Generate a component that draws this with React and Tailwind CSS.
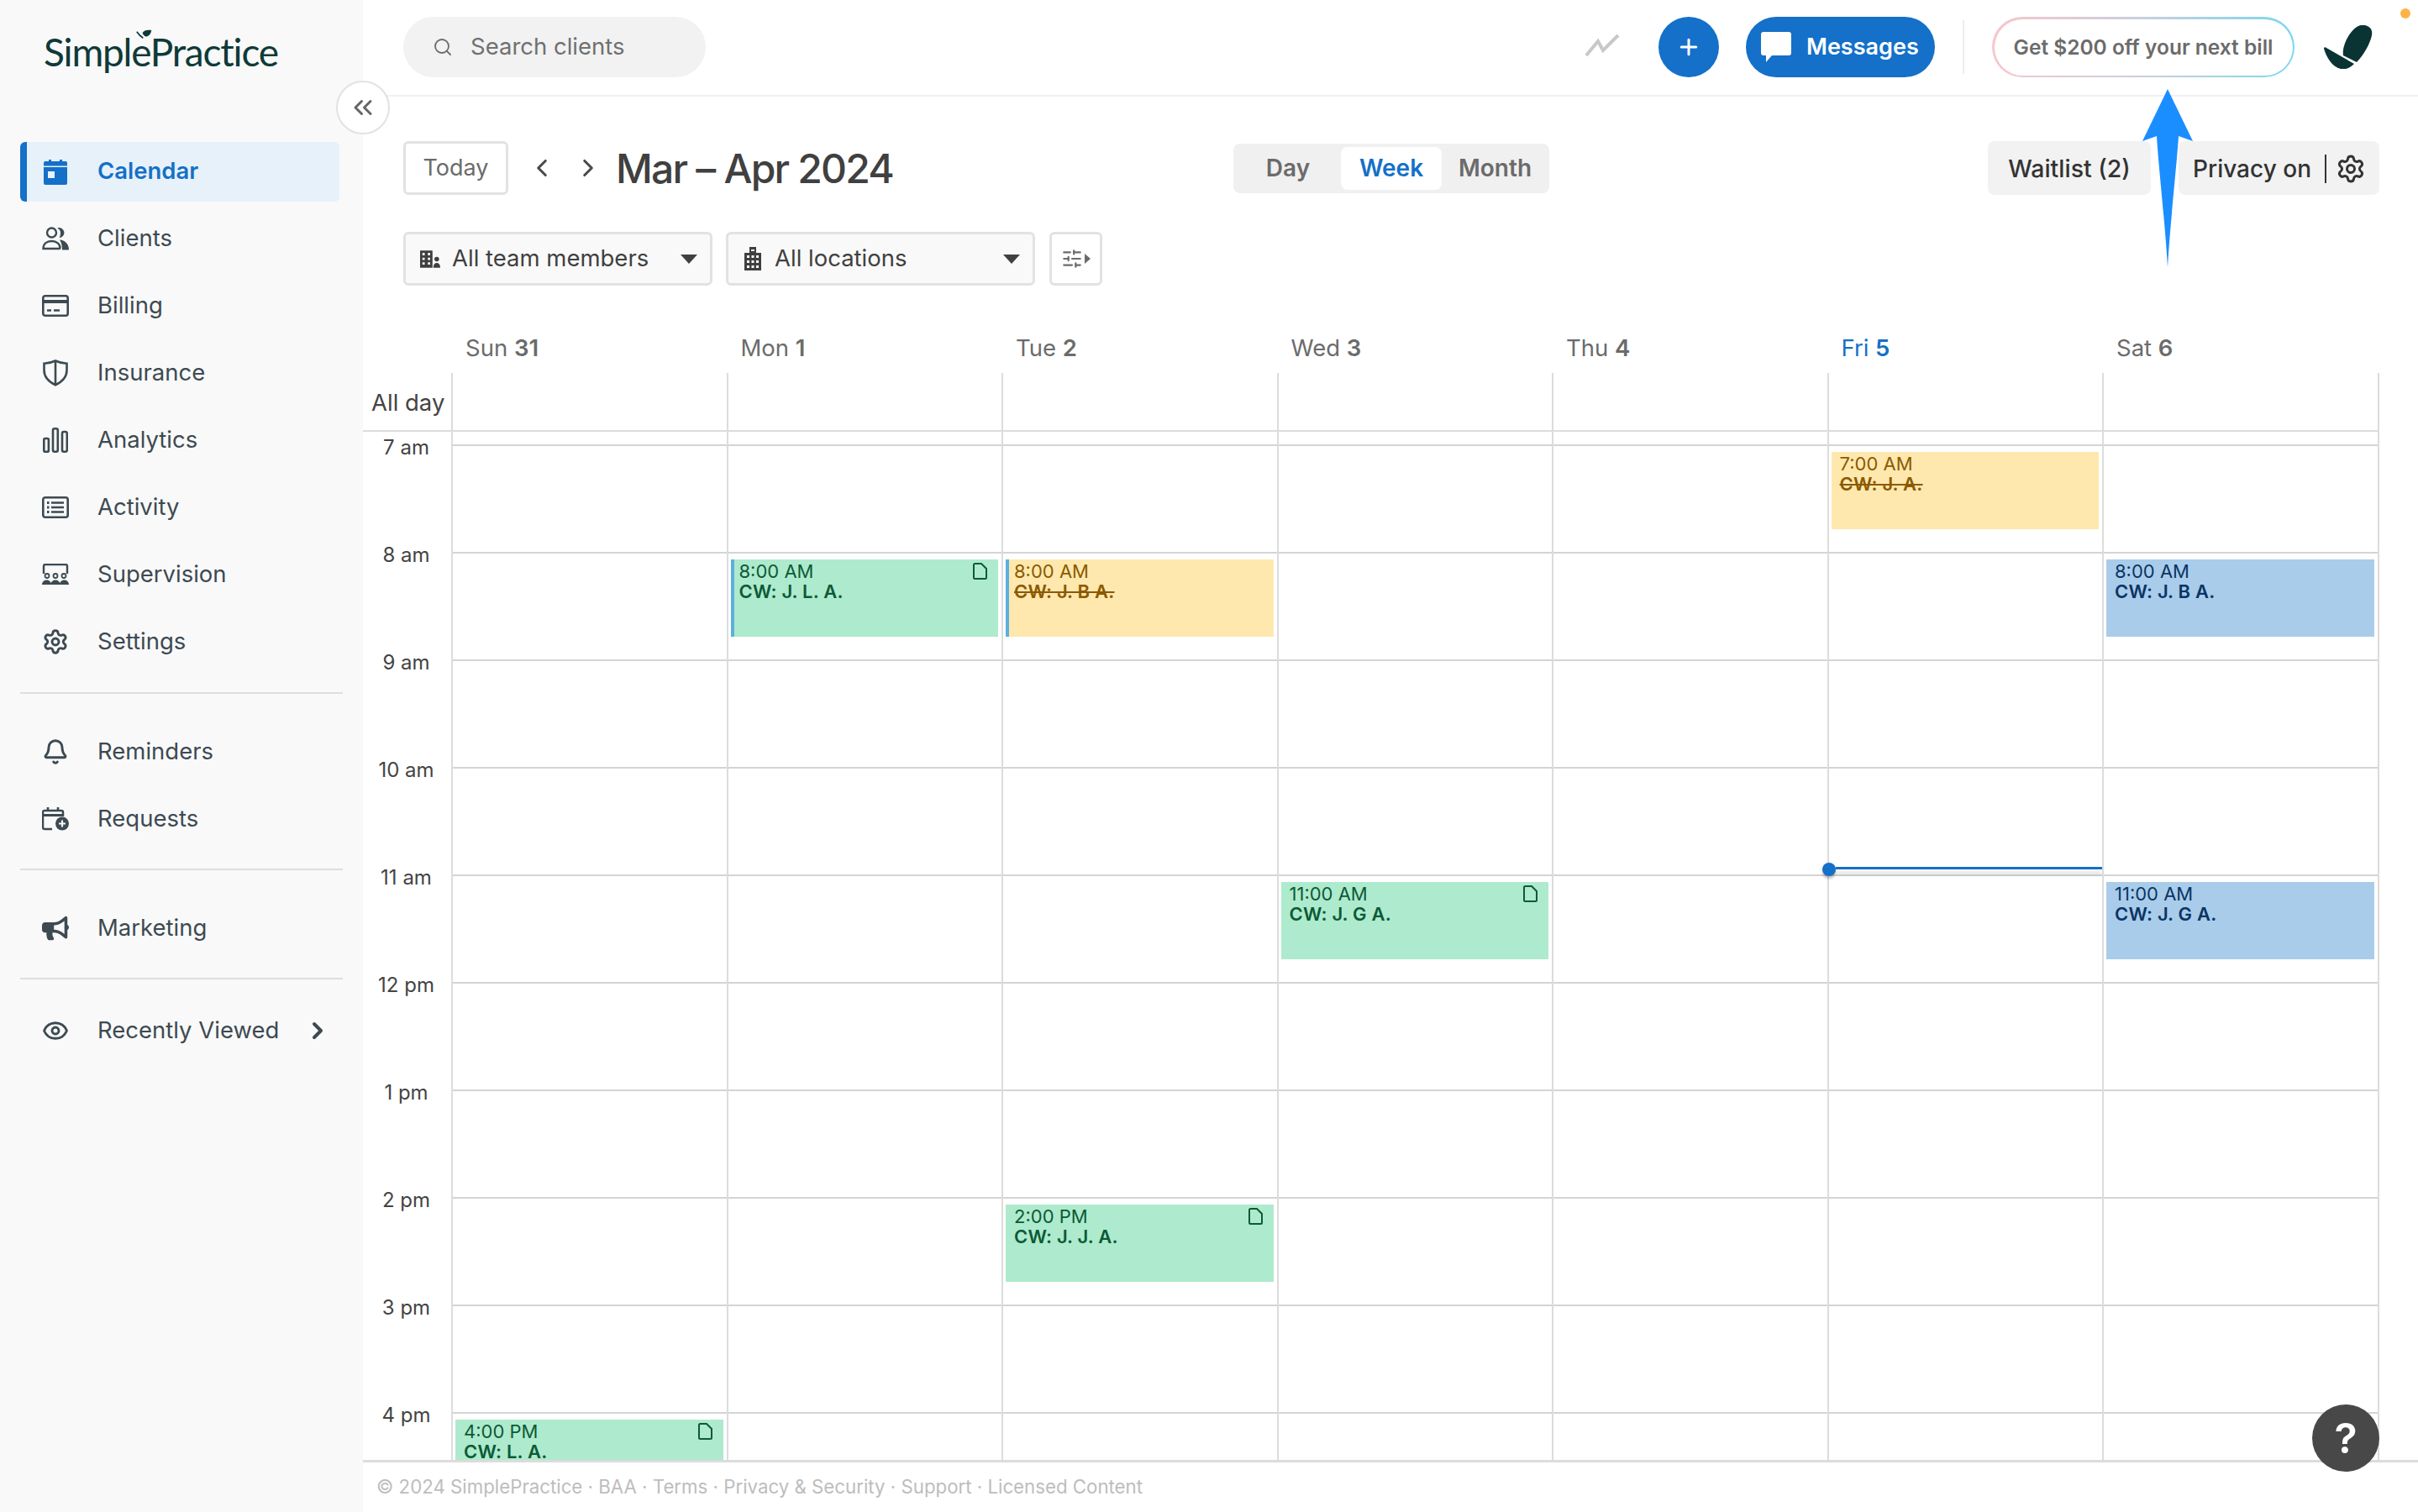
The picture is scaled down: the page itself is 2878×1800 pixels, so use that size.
import { Settings, Bell, Eye, ChevronRight, ChevronLeft, ChevronsLeft, Search, Plus, SlidersHorizontal } from "lucide-react";
import { FaBullhorn } from "react-icons/fa";

const CalendarIcon = () => (
  <svg viewBox="0 0 32 32" className="w-[32px] h-[32px]" fill="#1470c8">
    <path d="M8 2h3v4H8zM21 2h3v4h-3z" />
    <path fillRule="evenodd" d="M4 4h24a2 2 0 0 1 2 2v24a2 2 0 0 1-2 2H4a2 2 0 0 1-2-2V6a2 2 0 0 1 2-2zM2 9.500v1.500h28V9.500zM7 16v8h8v-8z" />
  </svg>
);
const ClientsIcon = () => (
  <svg viewBox="0 0 32 28" className="w-[32px] h-[28px]" fill="none" stroke="#3d4a52" strokeWidth="2.400">
    <circle cx="11.500" cy="7" r="5.500" />
    <path d="M1.500 26c0-5.500 4-9 10-9s10 3.500 10 8c0 .6-.4 1-1 1z" />
    <path fill="#3d4a52" stroke="none" d="M18 1.500a6 6 0 1 1 2.500 11.500c1-1.500 1.500-3.500 1.500-6s-1.500-4.500-4-5.500zM21 15.500c6 .5 11 4.500 11 12h-8c0-5-1-9-3-12z" />
  </svg>
);
const BillingIcon = () => (
  <svg viewBox="0 0 32 26" className="w-[32px] h-[26px]" fill="none" stroke="#3d4a52" strokeWidth="2.600">
    <rect x="1.300" y="1.300" width="29.400" height="23.400" rx="2.500" />
    <path d="M1 8h30" strokeWidth="4" />
    <path d="M6 18.500h5M14 18.500h7" />
  </svg>
);
const ShieldIcon = () => (
  <svg viewBox="0 0 32 32" className="w-[32px] h-[32px]" fill="none" stroke="#3d4a52" strokeWidth="2.600">
    <path d="M16 1.500c4 2 8.500 3 13.500 3.200v8c0 7.500-5 13.500-13.500 17.500C7.500 26.200 2.500 20.200 2.500 12.700v-8C7.500 4.500 12 3.500 16 1.500z" />
    <path d="M16 2v28" />
  </svg>
);
const AnalyticsIcon = () => (
  <svg viewBox="0 0 30 30" className="w-[30px] h-[30px]" fill="none" stroke="#3d4a52" strokeWidth="2.600">
    <rect x="1.300" y="13" width="5.600" height="15.700" rx="1.500" />
    <rect x="12" y="1.300" width="5.800" height="27.400" rx="2" />
    <rect x="23" y="5" width="5.800" height="23.700" rx="2" />
  </svg>
);
const ActivityIcon = () => (
  <svg viewBox="0 0 32 26" className="w-[32px] h-[26px]" fill="none" stroke="#3d4a52" strokeWidth="2.600">
    <rect x="1.300" y="1.300" width="29.400" height="23.400" rx="2.500" />
    <path d="M11 7.500h15M11 13h15M11 18.500h15" />
    <path d="M6 7.500h2.500M6 13h2.500M6 18.500h2.500" strokeWidth="3" />
  </svg>
);
const SupervisionIcon = () => (
  <svg viewBox="0 0 32 26" className="w-[32px] h-[26px]" fill="#3d4a52">
    <path d="M2 12V3a2 2 0 0 1 2-2h24a2 2 0 0 1 2 2v9" fill="none" stroke="#3d4a52" strokeWidth="2.400" />
    <circle cx="6" cy="14.500" r="2.500" fill="none" stroke="#3d4a52" strokeWidth="1.800" />
    <circle cx="16" cy="14.500" r="2.500" fill="none" stroke="#3d4a52" strokeWidth="1.800" />
    <circle cx="26" cy="14.500" r="2.500" fill="none" stroke="#3d4a52" strokeWidth="1.800" />
    <path d="M0 25c0-3 2-5.500 5.500-5.500s5.500 2.500 5.500 5.500zM10.500 25c0-3 2-5.500 5.500-5.500s5.500 2.500 5.500 5.500zM21 25c0-3 2-5.500 5.500-5.500s5.500 2.500 5.500 5.500z" />
  </svg>
);
const RequestsIcon = () => (
  <svg viewBox="0 0 32 28" className="w-[32px] h-[28px]" fill="none" stroke="#3d4a52" strokeWidth="2.500">
    <path d="M12 26H3a2 2 0 0 1-2-2V6a2 2 0 0 1 2-2h20a2 2 0 0 1 2 2v5" />
    <path d="M1 9.500h24" strokeWidth="3" />
    <path d="M7 0v5M19 0v5" strokeWidth="2.600" />
    <circle cx="24" cy="19.500" r="8" fill="#3d4a52" stroke="none" />
    <path d="M24 15.500v8M20 19.500h8" stroke="#f9f9f9" strokeWidth="2.200" />
  </svg>
);

const navTop = [
  { label: "Calendar", icon: <CalendarIcon />, active: true },
  { label: "Clients", icon: <ClientsIcon /> },
  { label: "Billing", icon: <BillingIcon /> },
  { label: "Insurance", icon: <ShieldIcon /> },
  { label: "Analytics", icon: <AnalyticsIcon /> },
  { label: "Activity", icon: <ActivityIcon /> },
  { label: "Supervision", icon: <SupervisionIcon /> },
  { label: "Settings", icon: <Settings size={36} strokeWidth={2.2} color="#3d4a52" /> },
];

function NavItem({ item }) {
  if (item.active) {
    return (
      <div className="h-[80px] flex items-center">
        <div className="w-[380px] h-[71px] flex items-center bg-[#e7f1fa] rounded-[6px] border-l-[8px] border-[#1470c8] pl-[18px]">
          <span className="w-[32px] flex justify-center">{item.icon}</span>
          <span className="ml-[34px] text-[27.500px] font-semibold text-[#1470c8]">{item.label}</span>
        </div>
      </div>
    );
  }
  return (
    <div className="h-[80px] flex items-center pl-[26px]">
      <span className="w-[32px] flex justify-center">{item.icon}</span>
      <span className="ml-[34px] text-[27.500px] text-[#3d4a52]">{item.label}</span>
      {item.chevron && <ChevronRight size={32} strokeWidth={3} color="#3d4a52" className="ml-[30px]" />}
    </div>
  );
}

function Sidebar() {
  return (
    <aside className="w-[432px] shrink-0 bg-[#f9f9f9] h-full">
      <div className="h-[164px] pl-[52px] pt-[31px]">
        <div className="relative w-[280px]">
          <span className="text-[46px] leading-[62px] text-[#0f3a38] font-['Lato',sans-serif] tracking-[-1.200px]">SimplePractice</span>
          <svg viewBox="0 0 24 20" className="absolute left-[110px] top-[4px] w-[20px] h-[17px]" fill="#0f3a38">
            <path d="M9 5c2-4 7-5 13-4-1 5-3 8-7 9-2 .5-4-1-6-5z" />
            <path d="M1 3c2 3 4 6 9 9" fill="none" stroke="#0f3a38" strokeWidth="2" />
          </svg>
        </div>
      </div>
      <div className="pl-[24px]">
        {navTop.map((n) => <NavItem key={n.label} item={n} />)}
        <div className="w-[384px] h-[2px] bg-[#dedede] mt-[20px] mb-[29px]" />
        <NavItem item={{ label: "Reminders", icon: <Bell size={34} strokeWidth={2.2} color="#3d4a52" /> }} />
        <NavItem item={{ label: "Requests", icon: <RequestsIcon /> }} />
        <div className="w-[384px] h-[2px] bg-[#dedede] mt-[19px] mb-[29px]" />
        <NavItem item={{ label: "Marketing", icon: <FaBullhorn size={32} color="#3d4a52" /> }} />
        <div className="w-[384px] h-[2px] bg-[#dedede] mt-[19px] mb-[21px]" />
        <NavItem item={{ label: "Recently Viewed", icon: <Eye size={36} strokeWidth={2.2} color="#3d4a52" />, chevron: true }} />
      </div>
    </aside>
  );
}

function TopBar() {
  return (
    <header className="h-[115px] border-b-2 border-[#f0f0f0] flex items-start pt-[20px] pl-[48px] pr-[54px]">
      <div className="w-[360px] h-[72px] bg-[#f2f2f2] rounded-full flex items-center pl-[35px]">
        <Search size={24} strokeWidth={1.8} color="#6b6b6b" />
        <span className="ml-[21px] text-[27.500px] text-[#707070]">Search clients</span>
      </div>
      <div className="flex-1" />
      <svg viewBox="0 0 42 28" className="w-[42px] h-[28px] mt-[20px] mr-[46px]" fill="none" stroke="#c8c8c8" strokeWidth="4">
        <path d="M2 26 L16 9 L22 20 L40 2" />
      </svg>
      <div className="w-[72px] h-[72px] rounded-full bg-[#1470c8] flex items-center justify-center mr-[32px]">
        <Plus size={30} strokeWidth={2.4} color="#fff" />
      </div>
      <div className="w-[225px] h-[72px] rounded-full bg-[#1470c8] flex items-center pl-[18px] mr-[33px]">
        <svg viewBox="0 0 36 36" className="w-[36px] h-[36px]" fill="#fff">
          <path d="M3 0h30a3 3 0 0 1 3 3v22a3 3 0 0 1-3 3H13l-7 8v-8H3a3 3 0 0 1-3-3V3a3 3 0 0 1 3-3z" />
        </svg>
        <span className="ml-[18px] text-[27px] font-semibold text-white">Messages</span>
      </div>
      <div className="w-[2px] h-[64px] mt-[4px] bg-[#eeeeee] mr-[33px]" />
      <div className="w-[360px] h-[72px] rounded-full p-[2.500px] bg-[linear-gradient(90deg,#f8c6cc,#c9cfdc,#7bd6f0)]">
        <div className="w-full h-full rounded-full bg-white flex items-center justify-center">
          <span className="text-[24.500px] font-semibold text-[#6b6b6b]">Get $200 off your next bill</span>
        </div>
      </div>
      <svg viewBox="0 0 58 52" className="w-[58px] h-[52px] mt-[10px] ml-[35px]" fill="#0a3333">
        <path d="M41 1C48-2 59 1 57 12 55 22 47 36 39 44L23 36C21 24 31 6 41 1z" />
        <path d="M0 28C0 26 2 26 3 27L36 46C31 51 26 53 20 52 10 50 3 38 0 28z" />
      </svg>
    </header>
  );
}

function CalendarToolbar() {
  return (
    <div className="pl-[48px] pr-[46px]">
      <div className="flex items-center h-[64px] mt-[53px]">
        <div className="w-[125px] h-[64px] border-[3px] border-[#e2e2e2] rounded-[6px] flex items-center justify-center text-[27px] text-[#6b6b6b]">Today</div>
        <ChevronLeft size={34} strokeWidth={2.2} color="#4a4a4a" className="ml-[23px]" />
        <ChevronRight size={34} strokeWidth={2.2} color="#4a4a4a" className="ml-[21px]" />
        <span className="ml-[16px] pt-[1px] text-[48px] font-medium text-[#404040] tracking-[-1.800px]">Mar – Apr 2024</span>
        <div className="flex-1" />
        <div className="w-[376px] h-[59px] mr-[522px] bg-[#f0f0f0] rounded-[8px] flex items-center px-[4px] text-[28px] font-semibold text-[#6b6b6b]">
          <span className="w-[122px] text-center">Day</span>
          <span className="ml-[2px] w-[120px] h-[51px] bg-white rounded-[8px] flex items-center justify-center text-[#1470c8]">Week</span>
          <span className="flex-1 text-center pl-[3px]">Month</span>
        </div>
        <div className="w-[194px] h-[64px] pt-[2px] bg-[#f2f2f2] rounded-[8px] flex items-center justify-center text-[28.500px] font-medium text-[#333]">Waitlist (2)</div>
        <div className="w-[239px] h-[64px] pt-[2px] ml-[33px] bg-[#f2f2f2] rounded-[8px] flex items-center pl-[17px] text-[28px] font-medium text-[#333]">
          Privacy on
          <span className="w-[2px] h-[34px] bg-[#333] ml-[16px]" />
          <Settings size={36} strokeWidth={2} color="#333" className="ml-[11px]" />
        </div>
      </div>
      <div className="flex items-center gap-[16px] mt-[44px]">
        <Select label="All team members" icon={
          <svg viewBox="0 0 26 22" className="w-[24px] h-[21px]" fill="#3f3f3f">
            <path fillRule="evenodd" d="M0 0h16v22H0zM3 3v3h3V3zm7 0v3h3V3zM3 9v3h3V9zm7 0v3h3V9zM3 15v3h3v-3zm7 0v3h3v-3z" />
            <circle cx="21.500" cy="11" r="3" />
            <path d="M17 22c0-4 2-6 4.500-6s4.500 2 4.500 6z" />
          </svg>
        } />
        <Select label="All locations" icon={
          <svg viewBox="0 0 20 28" className="w-[20px] h-[28px]" fill="#3f3f3f">
            <path fillRule="evenodd" d="M6 0h8v7h6v21H0V7h6zM8 3v2h4V3zM3 10v3h3v-3zm5.500 0v3h3v-3zM14 10v3h3v-3zM3 16v3h3v-3zm5.500 0v3h3v-3zM14 16v3h3v-3zM3 22v3h3v-3zm5.500 0v3h3v-3zM14 22v3h3v-3z" />
          </svg>
        } />
        <div className="w-[63px] h-[64px] ml-[1px] border-[3px] border-[#e2e2e2] rounded-[6px] flex items-center justify-center">
          <SlidersHorizontal size={26} strokeWidth={2} color="#6b6b6b" />
          <span className="w-0 h-0 border-y-[6px] border-y-transparent border-l-[7px] border-l-[#6b6b6b] ml-[2px]" />
        </div>
      </div>
    </div>
  );
}

function Select({ label, icon }) {
  return (
    <div className="w-[368px] h-[64px] bg-[#f9f9f9] border-[3px] border-[#e2e2e2] rounded-[6px] flex items-center pl-[15px] pr-[15px] text-[27.500px] text-[#404040]">
      <span className="w-[28px] flex justify-center">{icon}</span>
      <span className="ml-[12px] flex-1">{label}</span>
      <span className="w-0 h-0 border-x-[10px] border-x-transparent border-t-[11px] border-t-[#404040]" />
    </div>
  );
}

const hours = ["7 am", "8 am", "9 am", "10 am", "11 am", "12 pm", "1 pm", "2 pm", "3 pm", "4 pm"];

const days = [
  { name: "Sun", num: "31", events: { "4 pm": { time: "4:00 PM", who: "CW: L. A.", kind: "green", note: true } } },
  { name: "Mon", num: "1", events: { "8 am": { time: "8:00 AM", who: "CW: J. L. A.", kind: "green", note: true, bar: true } } },
  { name: "Tue", num: "2", events: {
    "8 am": { time: "8:00 AM", who: "CW: J. B A.", kind: "yellow", bar: true, strike: true },
    "2 pm": { time: "2:00 PM", who: "CW: J. J. A.", kind: "green", note: true },
  } },
  { name: "Wed", num: "3", events: { "11 am": { time: "11:00 AM", who: "CW: J. G A.", kind: "green", note: true } } },
  { name: "Thu", num: "4", events: {} },
  { name: "Fri", num: "5", today: true, events: { "7 am": { time: "7:00 AM", who: "CW: J. A.", kind: "yellow", strike: true } } },
  { name: "Sat", num: "6", events: {
    "8 am": { time: "8:00 AM", who: "CW: J. B A.", kind: "blue" },
    "11 am": { time: "11:00 AM", who: "CW: J. G A.", kind: "blue" },
  } },
];

const eventStyles = {
  green: "bg-[#aeeacd] text-[#0b5a36]",
  yellow: "bg-[#ffe8ae] text-[#8a5a00]",
  blue: "bg-[#a9cceb] text-[#0a3564]",
};

function EventCard({ ev }) {
  return (
    <div className={`relative h-[92px] mt-[7px] ml-[3px] mr-[4px] text-[22px] leading-[24px] pt-[2px] ${ev.bar ? "border-l-[4px] border-[#5bb0e0] pl-[6px]" : "pl-[10px]"} ${eventStyles[ev.kind]}`}>
      <div>{ev.time}</div>
      <div className={ev.strike ? "font-semibold tracking-[0.2px] line-through" : "font-semibold tracking-[0.2px]"}>{ev.who}</div>
      {ev.note && (
        <svg viewBox="0 0 17 20" className="absolute right-[13px] top-[4px] w-[17px] h-[20px]" fill="none" stroke="currentColor" strokeWidth="2">
          <path d="M2.500 1h7.500l6 6v10.500a1.500 1.500 0 0 1-1.500 1.500h-12a1.500 1.500 0 0 1-1.500-1.500v-15A1.500 1.500 0 0 1 2.500 1z" />
        </svg>
      )}
    </div>
  );
}

function DayColumn({ day }) {
  return (
    <div className="relative w-[327.500px] border-l-2 border-[#dcdcdc]">
      <div className="h-[70px] border-b-2 border-[#dcdcdc]" />
      <div className="h-[2px] bg-white" />
      <div className="h-[13px]" />
      {hours.map((h) => (
        <div key={h} className="h-[128px] border-t-2 border-[#d4d4d4]">
          {day.events[h] && <EventCard ev={day.events[h]} />}
        </div>
      ))}
      {day.today && (
        <div className="absolute left-[-8px] top-[583px] w-[333px] flex items-center">
          <span className="w-[16px] h-[16px] rounded-full bg-[#1470c8] shadow-[0_3px_3px_rgba(0,0,0,0.25)]" />
          <span className="flex-1 h-[3px] bg-[#1470c8] -mt-[3px] shadow-[0_6px_4px_rgba(0,0,0,0.16)]" />
        </div>
      )}
    </div>
  );
}

function CalendarGrid() {
  return (
    <div className="flex-1 min-h-0 flex flex-col">
      <div className="h-[104px] shrink-0 flex pl-[105px]">
        {days.map((d) => (
          <div key={d.name} className={`w-[327.500px] pl-[17px] pt-[58px] text-[27.500px] leading-[32px] ${d.today ? "text-[#1470c8]" : "text-[#6b6b6b]"}`}>
            {d.name} <span className="font-semibold">{d.num}</span>
          </div>
        ))}
      </div>
      <div className="flex-1 min-h-0 overflow-hidden flex border-b-[3px] border-[#dcdcdc]">
        <div className="w-[105px] shrink-0 text-[#444]">
          <div className="h-[70px] border-b-2 border-[#dcdcdc] text-[27.500px] leading-[70px] pl-[10px]">All day</div>
          <div className="h-[5px]" />
          {hours.map((h) => (
            <div key={h} className="h-[128px] text-center text-[24px] leading-[28px] pr-[2px]">{h}</div>
          ))}
        </div>
        {days.map((d) => <DayColumn key={d.name} day={d} />)}
        <div className="w-[2px] bg-[#dcdcdc]" />
      </div>
    </div>
  );
}

export default function App() {
  return (
    <div className="relative w-[2878px] h-[1800px] overflow-hidden flex bg-white font-['Inter',sans-serif]">
      <Sidebar />
      <main className="flex-1 min-w-0 h-full flex flex-col">
        <TopBar />
        <CalendarToolbar />
        <CalendarGrid />
        <footer className="h-[59px] shrink-0 flex items-center pl-[16px] pb-[2px] text-[22.250px] text-[#bdbdbd]">
          © 2024 SimplePractice · BAA · Terms · Privacy &amp; Security · Support · Licensed Content
        </footer>
      </main>

      <div className="absolute left-[400px] top-[96px] w-[64px] h-[64px] rounded-full bg-white border-2 border-[#e2e2e2] flex items-center justify-center">
        <ChevronsLeft size={36} strokeWidth={2} color="#666" />
      </div>
      <span className="absolute left-[2857px] top-[10px] w-[12px] h-[12px] rounded-full bg-[#ffb347]" />
      <svg viewBox="0 0 60 212" className="absolute left-[2550px] top-[106px] w-[60px] h-[212px]" fill="#1b8eff">
        <path d="M30 0 L60 62 L43 56 C41 90 33 160 30 212 C27 160 19 90 17 56 L0 62 Z" />
      </svg>
      <div className="absolute left-[2752px] top-[1672px] w-[80px] h-[80px] rounded-full bg-[#484848] flex items-center justify-center text-white text-[50px] font-semibold">?</div>
    </div>
  );
}
